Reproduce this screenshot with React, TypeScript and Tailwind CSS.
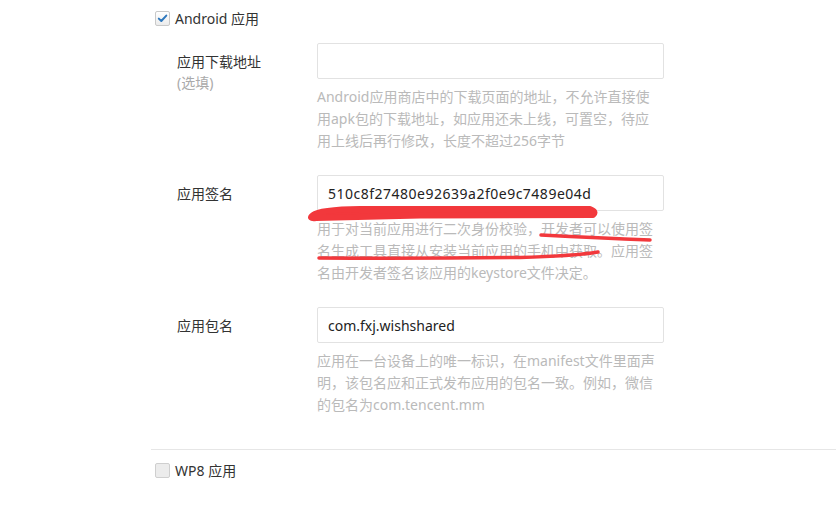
import React from "react";

function Checkbox({ checked }: { checked: boolean }) {
  return (
    <div
      className={
        checked
          ? "w-[15px] h-[15px] rounded-[2px] border border-[#c9c9c9] bg-gradient-to-b from-white to-[#ececec] flex items-center justify-center"
          : "w-[15px] h-[15px] rounded-[2px] border border-[#cfcfcf] bg-[#ececec]"
      }
    >
      {checked && (
        <svg width="11" height="11" viewBox="0 0 11 11">
          <path d="M1.8 5.6 L4.3 8 L9.3 2.6" fill="none" stroke="#2e78bd" strokeWidth="2" strokeLinecap="round" strokeLinejoin="round" />
        </svg>
      )}
    </div>
  );
}

function Row({
  label,
  sub,
  value,
  mono,
  help,
  className,
}: {
  label: string;
  sub?: string;
  value?: string;
  mono?: boolean;
  help: string[];
  className?: string;
}) {
  return (
    <div className={"flex " + (className ?? "")}>
      <div className="w-[162px] pl-[22px] pt-[8px] leading-[21px]">
        <div className="text-[#333]">{label}</div>
        {sub && <div className="text-[#aaa]">{sub}</div>}
      </div>
      <div className="w-[347px]">
        <div className="h-[36px] border border-[#e2e2e2] rounded-[2px] px-[10px] flex items-center text-[#222]">
          <span className={mono ? "tracking-[0.5px]" : ""}>{value}</span>
        </div>
        <div className="mt-[7px] leading-[22px] text-[#bababa]">
          {help.map((l, i) => (
            <div key={i} className="whitespace-nowrap">
              {l}
            </div>
          ))}
        </div>
      </div>
    </div>
  );
}

export default function App() {
  return (
    <div className="relative w-[836px] h-[525px] bg-white overflow-hidden font-['Noto_Sans','Noto_Sans_CJK_SC',sans-serif] text-[14px]">
      <div className="pl-[151px] pt-[11px]">
        <div className="ml-[4px] flex items-center h-[15px] gap-[5px] text-[#333]">
          <Checkbox checked />
          <span>Android 应用</span>
        </div>
        <Row
          className="mt-[17px] ml-[4px]"
          label="应用下载地址"
          sub="(选填)"
          value=""
          help={[
            "Android应用商店中的下载页面的地址，不允许直接使",
            "用apk包的下载地址，如应用还未上线，可置空，待应",
            "用上线后再行修改，长度不超过256字节",
          ]}
        />
        <Row
          className="mt-[23px] ml-[4px]"
          label="应用签名"
          value="510c8f27480e92639a2f0e9c7489e04d"
          mono
          help={[
            "用于对当前应用进行二次身份校验，开发者可以使用签",
            "名生成工具直接从安装当前应用的手机中获取。应用签",
            "名由开发者签名该应用的keystore文件决定。",
          ]}
        />
        <Row
          className="mt-[23px] ml-[4px]"
          label="应用包名"
          value="com.fxj.wishshared"
          help={[
            "应用在一台设备上的唯一标识，在manifest文件里面声",
            "明，该包名应和正式发布应用的包名一致。例如，微信",
            "的包名为com.tencent.mm",
          ]}
        />
        <div className="mt-[33px] border-t border-[#e6e6e6]" />
        <div className="ml-[4px] mt-[13px] flex items-center h-[15px] gap-[5px] text-[#333]">
          <Checkbox checked={false} />
          <span>WP8 应用</span>
        </div>
      </div>
      <svg className="absolute left-0 top-0 pointer-events-none" width="836" height="525" viewBox="0 0 836 525">
        <path
          d="M313 215 Q320 209.5 360 209 L590 209 Q597 211.5 593 215 L420 215.5 L316 218 Q308 219 313 215 Z"
          fill="#f2383c"
          stroke="#f2383c"
          strokeWidth="6"
          strokeLinejoin="round"
        />
        <path d="M541 235 Q600 238 650 240" fill="none" stroke="#f2383c" strokeWidth="3.5" strokeLinecap="round" />
        <path d="M319 258 Q420 258.5 520 257.5 Q575 256 598 252" fill="none" stroke="#f2383c" strokeWidth="3.5" strokeLinecap="round" />
      </svg>
    </div>
  );
}
